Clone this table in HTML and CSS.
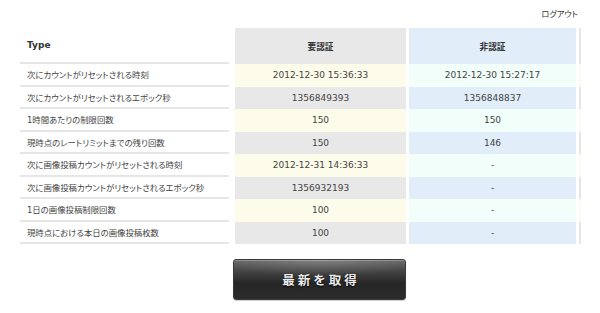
FILE: index.html
```html
<!DOCTYPE html>
<html lang="ja">
<head>
<meta charset="utf-8">
<link rel="stylesheet" href="styles.css">
</head>
<body>
<div class="page">
  <div class="topbar"><a class="logout">ログアウト</a></div>
  <div class="table">
    <div class="c1 head">Type</div>
    <div class="c2 head"><b>要認証</b></div>
    <div class="c3 head"><b>非認証</b></div>
    <div class="c4 head"></div>

    <div class="c1">次にカウントがリセットされる時刻</div>
    <div class="c2 odd">2012-12-30 15:36:33</div>
    <div class="c3 odd">2012-12-30 15:27:17</div>
    <div class="c4 odd"></div>

    <div class="c1">次にカウントがリセットされるエポック秒</div>
    <div class="c2 even">1356849393</div>
    <div class="c3 even">1356848837</div>
    <div class="c4 even"></div>

    <div class="c1">1時間あたりの制限回数</div>
    <div class="c2 odd">150</div>
    <div class="c3 odd">150</div>
    <div class="c4 odd"></div>

    <div class="c1">現時点のレートリミットまでの残り回数</div>
    <div class="c2 even">150</div>
    <div class="c3 even">146</div>
    <div class="c4 even"></div>

    <div class="c1">次に画像投稿カウントがリセットされる時刻</div>
    <div class="c2 odd">2012-12-31 14:36:33</div>
    <div class="c3 odd">-</div>
    <div class="c4 odd"></div>

    <div class="c1">次に画像投稿カウントがリセットされるエポック秒</div>
    <div class="c2 even">1356932193</div>
    <div class="c3 even">-</div>
    <div class="c4 even"></div>

    <div class="c1">1日の画像投稿制限回数</div>
    <div class="c2 odd">100</div>
    <div class="c3 odd">-</div>
    <div class="c4 odd"></div>

    <div class="c1">現時点における本日の画像投稿枚数</div>
    <div class="c2 even">100</div>
    <div class="c3 even">-</div>
    <div class="c4 even"></div>
  </div>
  <div class="actions">
    <button class="refresh">最新を取得</button>
  </div>
</div>
</body>
</html>
```
FILE: styles.css
```css
html, body {
  margin: 0;
  padding: 0;
  background: #ffffff;
}
body {
  font-family: "DejaVu Sans", "Noto Sans CJK JP", sans-serif;
  font-size: 9px;
  color: #444;
  font-feature-settings: "palt";
}
.page {
  width: 600px;
  height: 313px;
  overflow: hidden;
}
.topbar {
  display: flex;
  justify-content: flex-end;
  padding: 9px 22px 0 0;
  height: 19px;
  box-sizing: border-box;
}
.logout {
  font-size: 8.2px;
  color: #333;
  line-height: 10px;
}
.table {
  display: grid;
  grid-template-columns: 212px 171px 167px 2px;
  grid-template-rows: 36px;
  grid-auto-rows: 22.5px;
  column-gap: 3px;
  margin: 9px 0 0 20px;
}
.table > div {
  display: flex;
  align-items: center;
}
.c1 {
  margin-right: 3px;
  padding-left: 7px;
  border-bottom: 2px solid #e6e6e6;
  box-sizing: border-box;
  color: #444;
  font-size: 8.4px;
}
.c1.head {
  font-weight: bold;
  color: #333;
  font-size: 9px;
}
.c2, .c3 {
  justify-content: center;
  color: #444;
}
.c2.head, .c3.head {
  color: #333;
  font-size: 8.6px;
}
.c2.head { background: #e8e8e8; }
.c3.head { background: #e1edf9; }
.c4.head { background: #e6e6e6; }
.c2.odd { background: #fdfbea; }
.c2.even { background: #e8e8e8; }
.c3.odd { background: #f2fefa; }
.c3.even { background: #e1edf9; }
.c4.odd { background: #fcfbee; }
.c4.even { background: #e6e6e6; }
.actions {
  display: flex;
  padding: 15px 0 0 233px;
}
.refresh {
  width: 173px;
  height: 41px;
  border: 1px solid #3a3a3a;
  border-radius: 3px;
  background: radial-gradient(ellipse 60% 40% at 50% 0%, rgba(255,255,255,0.18), rgba(255,255,255,0) 100%), linear-gradient(#666 0%, #3e3e3e 35%, #262626 60%, #2c2c2c 100%);
  box-shadow: inset 0 1px 0 rgba(255,255,255,0.25), 0 1px 1px rgba(0,0,0,0.2);
  color: #ececec;
  font-family: "Noto Sans CJK JP", sans-serif;
  font-size: 12.5px;
  font-weight: bold;
  letter-spacing: 3px;
  text-shadow: 0 1px 2px #000;
  padding: 0 0 0 3px;
}
```
